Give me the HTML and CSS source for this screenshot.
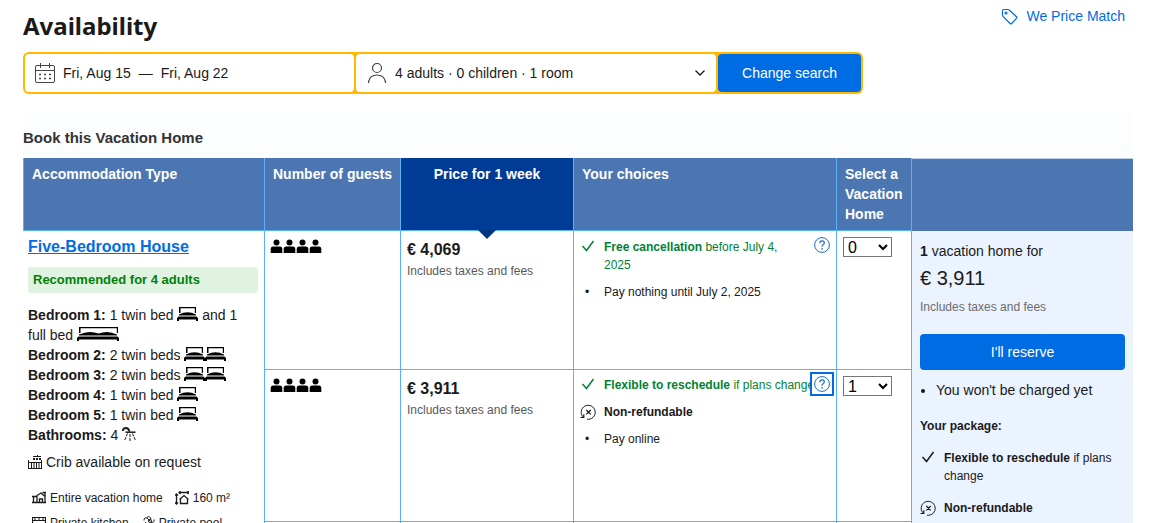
FILE: index.html
```html
<!DOCTYPE html>
<html lang="en">
<head>
<meta charset="utf-8">
<title>Availability</title>
<link rel="stylesheet" href="styles.css">
</head>
<body>
<svg class="sprite" aria-hidden="true">
  <symbol id="bed" viewBox="0 0 21 14"><path d="M2 0h17v6h-1.200V1.200H3.500V6H2z"/><path d="M2 7.500Q10.500 3 19 7.500V8.500H2zM1.500 9.500h18l1.500 1.500v3h-2v-1.500H2V14H0v-3z"/></symbol>
  <symbol id="bedwide" viewBox="0 0 42 14"><path d="M2 0h39v6h-1.200V1.200H3.500V6H2z"/><path d="M2 7.500Q12 3 21.500 6.500 31 3 40 7.500V8.500H2zM1.500 9.500h39L42 11v3h-2v-1.500H2V14H0v-3z"/></symbol>
  <symbol id="guest" viewBox="0 0 13 14"><circle cx="6.500" cy="3.500" r="3"/><path d="M.7 14v-4q0-2.500 2.500-2.500h6.600q2.500 0 2.500 2.500v4z"/></symbol>
  <symbol id="check" viewBox="0 0 14 12"><path d="M1.500 6l4 4.500L12.500 1" fill="none" stroke="currentColor" stroke-width="1.500"/></symbol>
  <symbol id="norefund" viewBox="0 0 16 16"><g fill="none" stroke="currentColor"><path d="M3.500 13.500A7 7 0 1 1 7 15.200"/><path d="M.5 13.500h3.300V10.200M6.300 6l4.400 4.400m0-4.400l-4.400 4.400" stroke-width="1.200"/></g></symbol>
  <symbol id="help" viewBox="0 0 16 16"><g fill="none" stroke="currentColor"><circle cx="8" cy="8" r="7.400"/><path d="M5.800 6.300q0-2.500 2.300-2.500 2.200 0 2.200 2 0 1.200-1.200 1.900Q8 8.300 8 9.700" stroke-width="1.200"/></g><circle cx="8" cy="11.900" r=".8" fill="currentColor"/></symbol>
</svg>

<main class="page">
  <header class="top">
    <h1 class="title">Availability</h1>
    <a class="match" href="#">
      <svg width="17" height="17" viewBox="0 0 17 17" fill="none" stroke="currentColor" stroke-width="1.200"><path d="M1.500 2.700q0-1.200 1.200-1.200H7q.7 0 1.200.5l7.300 6.700q.8.800 0 1.600l-4.800 5.200q-.8.800-1.600 0L2 8.300Q1.500 7.800 1.500 7z"/><circle cx="5" cy="5" r="1"/></svg>
      We Price Match
    </a>
  </header>

  <form class="search">
    <button type="button" class="field dates">
      <svg width="20" height="20" viewBox="0 0 20 20" fill="none" stroke="#444"><rect x=".5" y="2.500" width="19" height="17" rx="1.500"/><path d="M.5 7.500h19M5.500 0v5M14.500 0v5"/><path d="M4 11.500h2m3 0h2m3 0h2M4 15.500h2m3 0h2m3 0h2" stroke-width="1.500"/></svg>
      <span>Fri, Aug 15</span><span>—</span><span>Fri, Aug 22</span>
    </button>
    <button type="button" class="field people">
      <svg width="18" height="20" viewBox="0 0 18 20" fill="none" stroke="#444" stroke-width="1.200"><circle cx="9" cy="5" r="4.500"/><path d="M.6 20v-1.500Q2 12 9 12t8.400 6.500V20"/></svg>
      <span class="grow">4 adults · 0 children · 1 room</span>
      <svg width="10" height="6" viewBox="0 0 10 6" fill="none" stroke="#1a1a1a" stroke-width="1.300"><path d="M.5.500L5 5 9.500.500"/></svg>
    </button>
    <button type="submit" class="change">Change search</button>
  </form>

  <section class="booking">
    <h2 class="subtitle">Book this Vacation Home</h2>
    <table class="rooms">
      <colgroup><col class="c-type"><col class="c-guests"><col class="c-price"><col><col class="c-select"><col class="c-reserve"></colgroup>
      <thead>
        <tr>
          <th>Accommodation Type</th>
          <th>Number of guests</th>
          <th class="active">Price for 1 week</th>
          <th>Your choices</th>
          <th>Select a Vacation Home</th>
          <th class="blank"></th>
        </tr>
      </thead>
      <tbody>
        <tr class="first">
          <td class="type" rowspan="3">
            <a class="name" href="#">Five-Bedroom House</a>
            <p class="badge">Recommended for 4 adults</p>
            <ul class="beds">
              <li><b>Bedroom 1:</b> 1 twin bed <svg class="bed"><use href="#bed"/></svg> and 1 full bed <svg class="bed wide"><use href="#bedwide"/></svg></li>
              <li><b>Bedroom 2:</b> 2 twin beds <svg class="bed"><use href="#bed"/></svg><svg class="bed"><use href="#bed"/></svg></li>
              <li><b>Bedroom 3:</b> 2 twin beds <svg class="bed"><use href="#bed"/></svg><svg class="bed"><use href="#bed"/></svg></li>
              <li><b>Bedroom 4:</b> 1 twin bed <svg class="bed"><use href="#bed"/></svg></li>
              <li><b>Bedroom 5:</b> 1 twin bed <svg class="bed"><use href="#bed"/></svg></li>
              <li><b>Bathrooms:</b> 4 <svg class="shower" viewBox="0 0 14 14" fill="none" stroke="currentColor"><path d="M.8 4Q1 1 4 1q2.500 0 3.500 3.500" stroke-width="1.800"/><path d="M3.500 5.200h10" stroke-width="1.500"/><path d="M5.500 6.500L2.500 13.500M8 7v7M10.500 6.500l3 7" stroke-dasharray="3 1"/></svg></li>
            </ul>
            <p class="crib"><svg width="14" height="14" viewBox="0 0 14 14" fill="none" stroke="currentColor"><path d="M.5 5v9M13.500 5v9M0 7.500h14M0 13.500h14M3.500 8v5M6 8v5M8.500 8v5M11 8v5M9.500 0v2M5 1.500h8"/><path d="M5 4h2m1 0h2m1 0h2" stroke-width="2"/></svg> Crib available on request</p>
            <ul class="amenities">
              <li><svg width="14" height="14" viewBox="0 0 14 14" fill="none" stroke="currentColor"><path d="M0 11.500h14M1.500 11V5.500h3M5 11V4.500L9 2l3.500 3M13 1v10M7.500 11V8h3v3M10.500 1.500H14M0 5.500h2" stroke-width="1.300"/></svg>Entire vacation home</li>
              <li><svg width="14" height="14" viewBox="0 0 14 14" fill="none" stroke="currentColor"><path d="M1.500 3v10M0 4.500L1.500 3 3 4.500M0 11.500L1.500 13 3 11.500M4 1.500h10M5.500 0L4 1.500 5.500 3M12.500 0L14 1.500 12.500 3M4.500 8.500l4.500-4 4.500 4M5.500 8v4.500h7V8" stroke-width="1.300"/></svg>160 m²</li>
              <li><svg width="14" height="14" viewBox="0 0 14 14" fill="none" stroke="currentColor"><path d="M0 1.500h14M0 4.500h14M.5 1v13M13.500 1v13M2 3h2m2 0h2m2 0h2M3 7.500h8v5H3zM5 10h4" stroke-width="1.200"/></svg>Private kitchen</li>
              <li><svg width="14" height="14" viewBox="0 0 14 14" fill="none" stroke="currentColor"><circle cx="9" cy="5" r="1.500"/><path d="M3 4.500Q3 1 6 2l3 3M6 1.500Q9-1 10 3.500M13 3.500q1 3-3 3M5 6l-2 3 3 3M0 12q2-2 4 0t4 0 4 0"/></svg>Private pool</li>
            </ul>
          </td>
          <td><span class="guests" role="img" aria-label="4 guests"><svg><use href="#guest"/></svg><svg><use href="#guest"/></svg><svg><use href="#guest"/></svg><svg><use href="#guest"/></svg></span></td>
          <td class="price"><strong>€ 4,069</strong><small>Includes taxes and fees</small></td>
          <td class="choice">
            <ul class="terms">
              <li class="green"><svg class="tick"><use href="#check"/></svg><span><b>Free cancellation</b> before July 4, 2025</span></li>
              <li><i class="dot">•</i><span>Pay nothing until July 2, 2025</span></li>
            </ul>
            <button type="button" class="help" aria-label="More details"><svg><use href="#help"/></svg></button>
          </td>
          <td class="qty"><select aria-label="Quantity, free cancellation"><option>0</option><option>1</option></select></td>
          <td class="reserve" rowspan="3">
            <p class="summary"><b>1</b> vacation home for</p>
            <p class="total">€ 3,911</p>
            <p class="tax">Includes taxes and fees</p>
            <button type="button" class="book">I'll reserve</button>
            <ul class="note"><li>You won't be charged yet</li></ul>
            <h3 class="package">Your package:</h3>
            <ul class="terms loose">
              <li><svg class="tick"><use href="#check"/></svg><span><b>Flexible to reschedule</b> if plans change</span></li>
              <li><svg class="refund"><use href="#norefund"/></svg><b>Non-refundable</b></li>
            </ul>
          </td>
        </tr>
        <tr class="second">
          <td><span class="guests" role="img" aria-label="4 guests"><svg><use href="#guest"/></svg><svg><use href="#guest"/></svg><svg><use href="#guest"/></svg><svg><use href="#guest"/></svg></span></td>
          <td class="price"><strong>€ 3,911</strong><small>Includes taxes and fees</small></td>
          <td class="choice">
            <ul class="terms">
              <li class="green oneline"><svg class="tick"><use href="#check"/></svg><span><b>Flexible to reschedule</b> if plans change</span></li>
              <li><svg class="refund"><use href="#norefund"/></svg><b>Non-refundable</b></li>
              <li><i class="dot">•</i><span>Pay online</span></li>
            </ul>
            <button type="button" class="help focused" aria-label="More details"><svg><use href="#help"/></svg></button>
          </td>
          <td class="qty"><select aria-label="Quantity, non-refundable"><option>0</option><option selected>1</option></select></td>
        </tr>
        <tr class="third"><td></td><td></td><td></td><td></td></tr>
      </tbody>
    </table>
  </section>
</main>
</body>
</html>
```

FILE: styles.css
```css
* { box-sizing: border-box; }

body {
  margin: 0;
  height: 100vh;
  overflow: hidden;
  background: #fff;
  color: #1a1a1a;
  font: 14px/20px "Liberation Sans", Arial, sans-serif;
}

h1, h2, h3, p, ul { margin: 0; padding: 0; }
ul { list-style: none; }
button { font: inherit; border: 0; padding: 0; cursor: pointer; }
svg { flex: none; }
.sprite { position: absolute; width: 0; height: 0; }

.page { padding: 6px 28px 0 23px; }

.top {
  display: flex;
  justify-content: space-between;
  align-items: flex-start;
  padding-right: 8px;
}
.title {
  padding: 4px 0 10px;
  font: bold 24px/32px "Noto Sans", sans-serif;
}
.match {
  display: flex;
  align-items: center;
  gap: 8px;
  color: #006ce4;
  text-decoration: none;
}

.search {
  display: grid;
  grid-template-columns: 329fr 360fr 143fr;
  gap: 2px;
  max-width: 840px;
  padding: 2px;
  border-radius: 6px;
  background: #ffb700;
}
.field {
  display: flex;
  align-items: center;
  height: 38px;
  border-radius: 4px;
  background: #fff;
  color: #1a1a1a;
  text-align: left;
}
.dates { padding: 0 10px; gap: 8px; }
.people { padding: 0 11px 0 12px; gap: 9px; }
.grow { flex: 1; }
.change { border-radius: 4px; background: #006ce4; color: #fff; }

.booking { margin-top: 18px; padding-top: 16px; background: #fcfdff; }
.subtitle { margin-bottom: 10px; font-size: 15px; line-height: 20px; color: #333; }

.rooms {
  width: 100%;
  table-layout: fixed;
  border-collapse: separate;
  border-spacing: 0;
  background: #fff;
}
.c-type { width: 241px; }
.c-guests { width: 136px; }
.c-price { width: 173px; }
.c-select { width: 75px; }
.c-reserve { width: 222px; }

.rooms th {
  height: 73px;
  padding: 6px 0 6px 8px;
  border-left: 1px solid #57b2f8;
  border-bottom: 1px solid #57b2f8;
  background: #4c76b2;
  color: #fff;
  text-align: left;
  vertical-align: top;
}
.rooms th.active {
  position: relative;
  padding-left: 0;
  background: #003b95;
  text-align: center;
}
.active::after {
  content: "";
  position: absolute;
  top: 100%;
  left: 50%;
  margin-left: -9px;
  border: 9px solid transparent;
  border-top-color: #003580;
  border-bottom: 0;
}
.rooms th.blank { border-top: 1px solid #bfd3ee; border-bottom: 0; }

.rooms td {
  padding: 0 6px;
  border-left: 1px solid #57b2f8;
  border-bottom: 1px solid #57b2f8;
  vertical-align: top;
}
.first { height: 139px; }
.second { height: 152px; }
.third { height: 60px; }

.rooms td.type { padding: 6px 6px 12px 5px; border-left: 0; }
.name {
  display: block;
  color: #006ce4;
  font-size: 16px;
  font-weight: bold;
}
.badge {
  margin: 10px 0 12px;
  padding: 3px 5px;
  border-radius: 3px;
  background: #e0f3e0;
  color: #008009;
  font-size: 13px;
  font-weight: bold;
}
.bed { width: 21px; height: 14px; vertical-align: -1px; }
.wide { width: 42px; }
.shower { width: 14px; height: 14px; vertical-align: -1px; }
.crib { display: flex; align-items: center; gap: 4px; margin: 7px 0 16px; }
.amenities {
  display: flex;
  flex-wrap: wrap;
  gap: 5px 12px;
  padding-left: 4px;
  font-size: 12px;
}
.amenities li { display: flex; align-items: center; gap: 4px; }

.rooms td:has(.guests) { padding-left: 5px; }
.guests { display: flex; padding-top: 8px; color: #000; }
.guests svg { width: 13px; height: 14px; }

.price strong { display: block; padding-top: 9px; font-size: 16px; }
.price small { display: block; margin-top: 1px; font-size: 12px; color: #595959; }

.rooms td.choice { position: relative; padding: 7px 32px 0 6px; }
.rooms .second td.choice { padding-top: 6px; }
.terms { display: grid; gap: 9px; font-size: 12px; line-height: 18px; }
.loose { gap: 14px; }
.terms li { display: grid; grid-template-columns: 24px 1fr; }
.tick { width: 14px; height: 12px; margin: 2px 0 0 1px; }
.refund { width: 16px; height: 16px; margin-top: 1px; }
.dot { padding-left: 5px; font-style: normal; }
.green { color: #008234; }
.oneline { white-space: nowrap; }
.help {
  position: absolute;
  top: 2px;
  right: 2px;
  width: 24px;
  height: 24px;
  padding: 2px;
  border: 2px solid transparent;
  background: #fff;
  color: #1a6fc4;
}
.help svg { display: block; width: 16px; height: 16px; }
.focused { border-color: #006ce4; }

.qty select {
  display: block;
  width: 49px;
  height: 20px;
  margin-top: 6px;
  background: #fff;
  font: 16px "Liberation Sans", Arial, sans-serif;
}

.rooms td.reserve { padding: 10px 8px 12px; background: #ebf3ff; }
.total { margin: 5px 0 7px; font-size: 20px; line-height: 24px; }
.tax { margin-bottom: 17px; color: #6b6b6b; font-size: 12px; }
.book {
  width: 100%;
  height: 36px;
  border-radius: 4px;
  background: #006ce4;
  color: #fff;
}
.note { margin: 10px 0 16px; padding-left: 16px; list-style: disc; }
.package { margin-bottom: 13px; font-size: 12px; }
```
